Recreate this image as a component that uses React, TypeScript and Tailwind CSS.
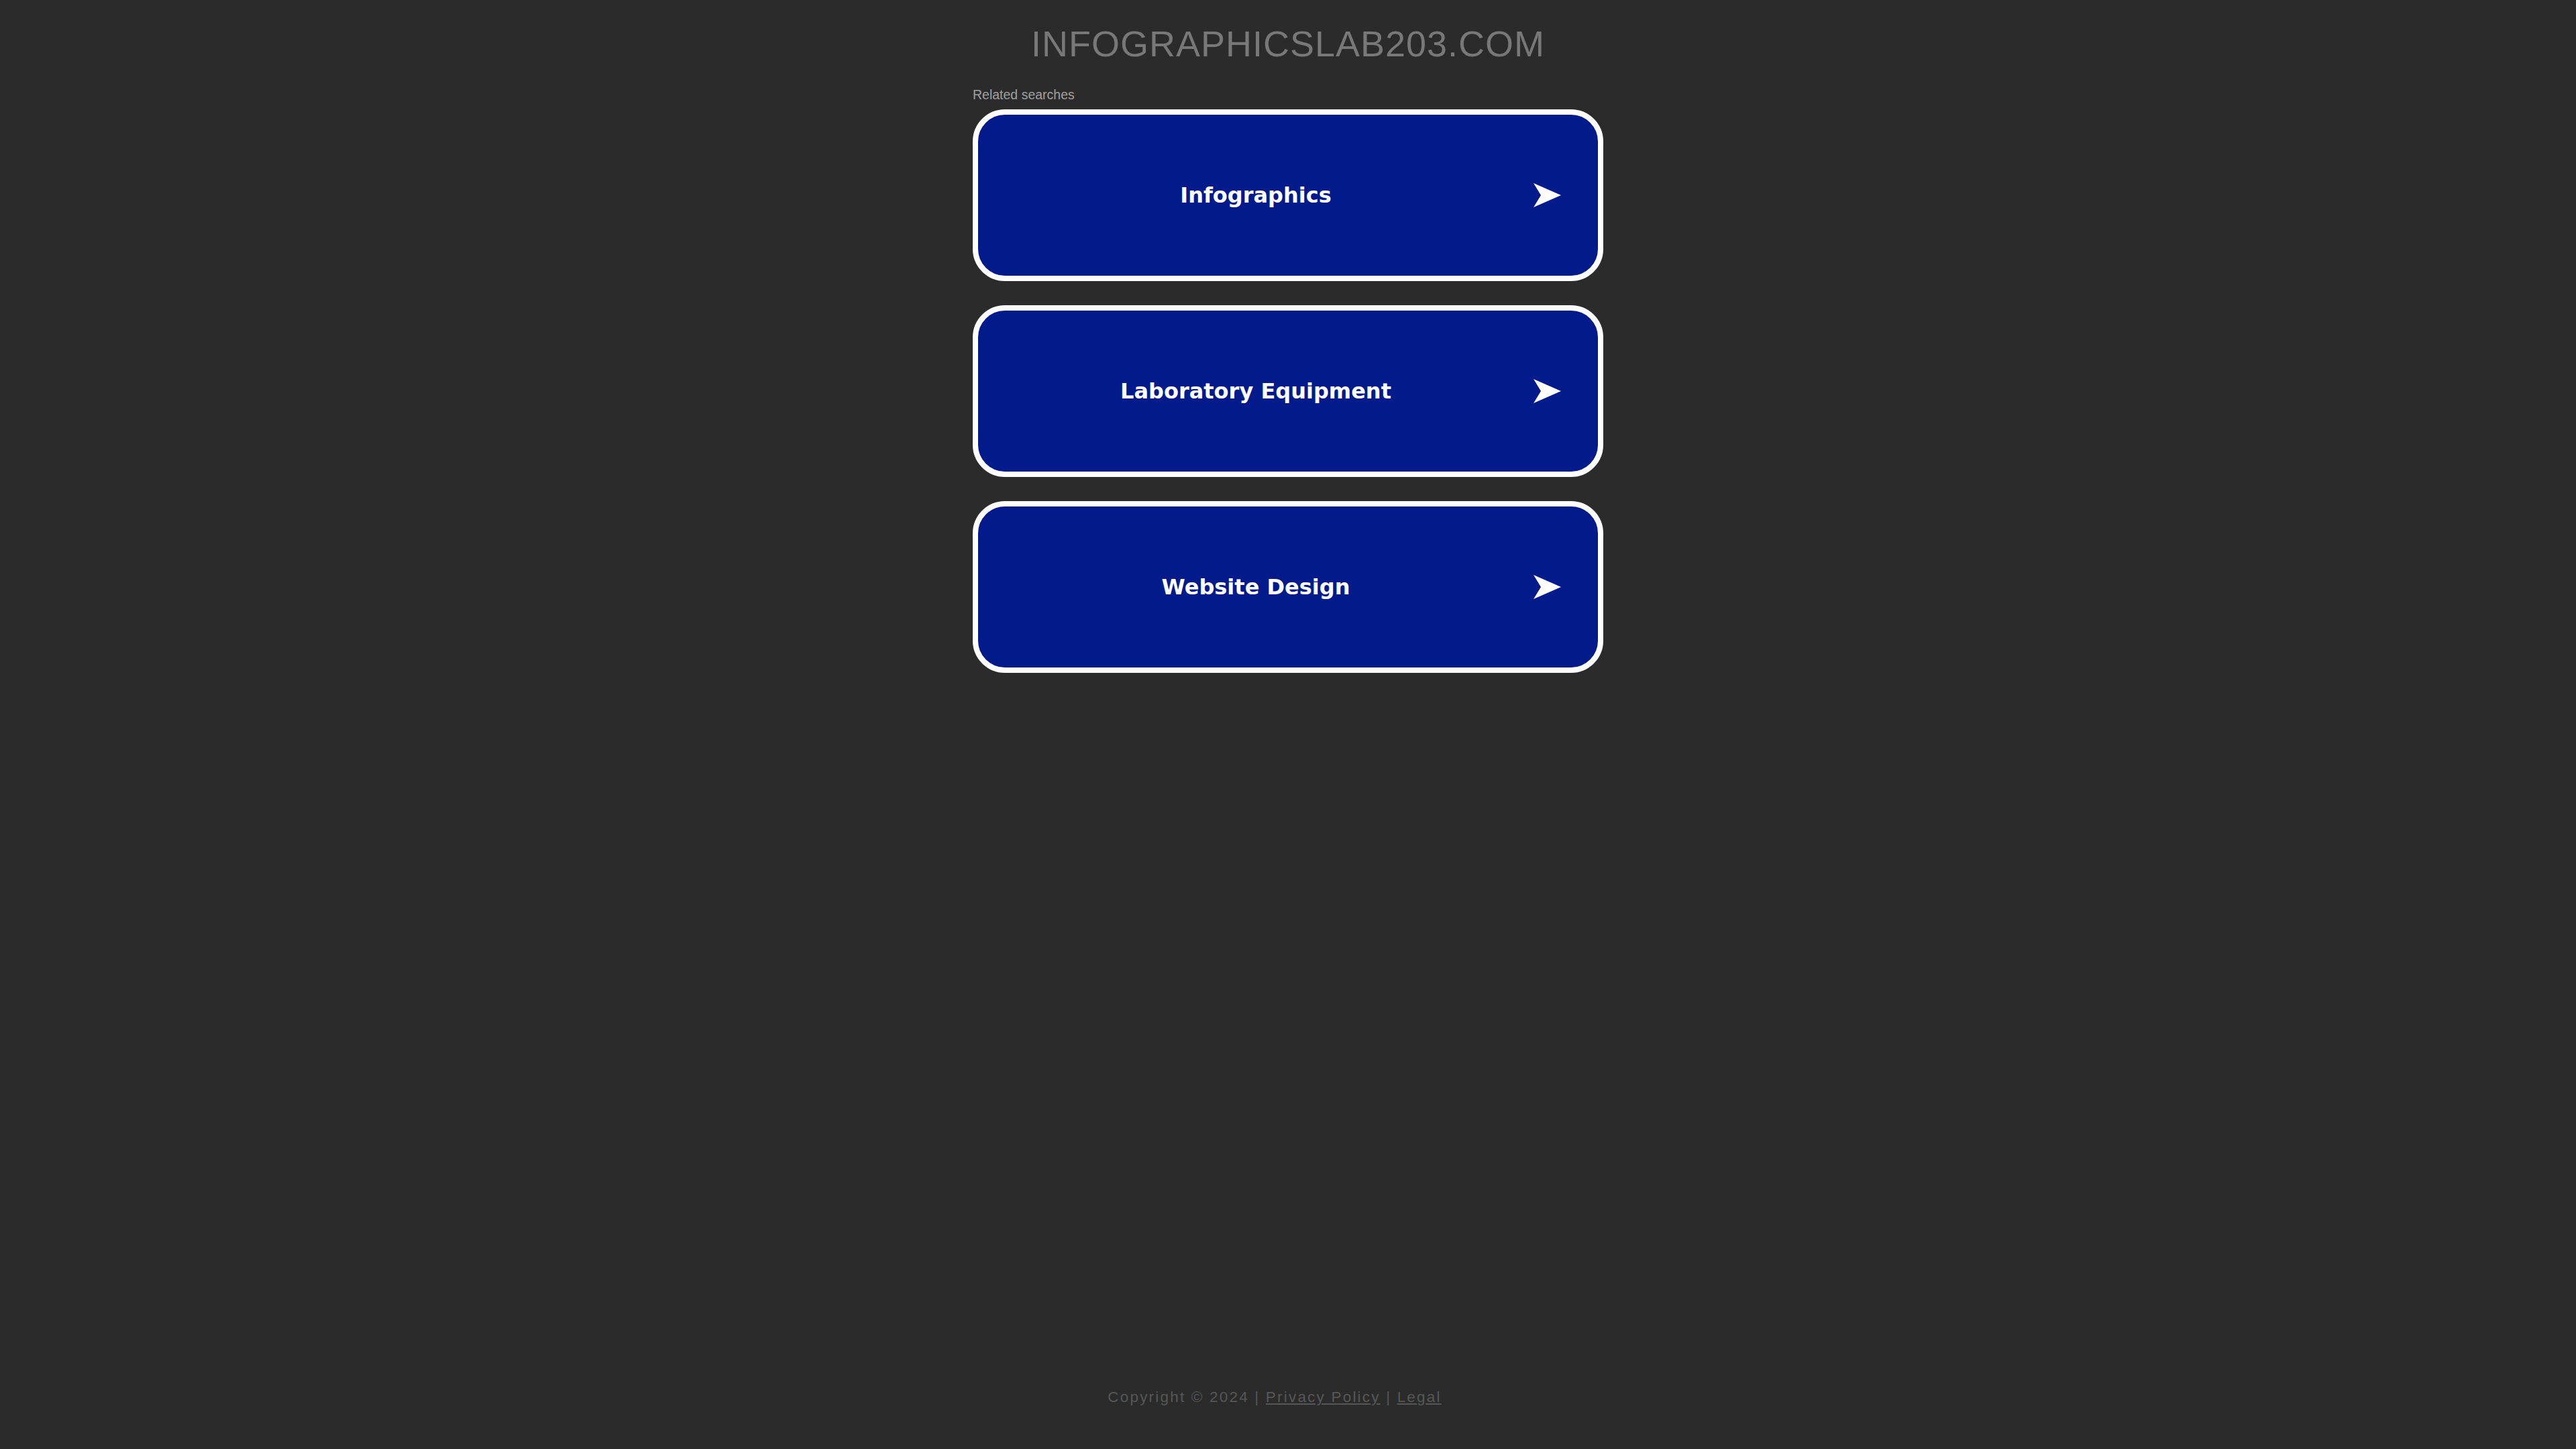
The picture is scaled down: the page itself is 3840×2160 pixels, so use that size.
import React from "react";

const items = ["Infographics", "Laboratory Equipment", "Website Design"];

function Arrow() {
  return (
    <svg width="41" height="36" viewBox="0 0 41 36" className="shrink-0">
      <polygon points="0,0 41,18 0,36 11,18" fill="#ffffff" />
    </svg>
  );
}

export default function App() {
  return (
    <div className="min-h-screen bg-[#2b2b2b] flex flex-col items-center font-['Liberation_Sans',Arial,sans-serif]">
      <div className="w-[940px] flex flex-col pt-[34px]">
        <h1 className="text-center text-[54px] leading-[62px] tracking-[1px] text-[#787878] font-normal">
          INFOGRAPHICSLAB203.COM
        </h1>
        <div className="mt-[34px] text-[19.5px] leading-[22px] text-[#a0a0a0]">Related searches</div>
        <div className="mt-[11px] flex flex-col gap-[36px]">
          {items.map((t) => (
            <div
              key={t}
              className="h-[256px] w-[940px] rounded-[48px] border-[8px] border-white bg-[#021a8a] flex items-center pr-[55px]"
            >
              <span className="flex-1 text-center text-white font-bold text-[32px] leading-[40px] font-['DejaVu_Sans',Verdana,sans-serif]">
                {t}
              </span>
              <Arrow />
            </div>
          ))}
        </div>
      </div>
      <div className="mt-auto pb-[64px] pr-[40px] text-[22.5px] leading-[26px] tracking-[2.2px] text-[#575757]">
        Copyright © 2024 | <span className="underline">Privacy Policy</span> | <span className="underline">Legal</span>
      </div>
    </div>
  );
}
